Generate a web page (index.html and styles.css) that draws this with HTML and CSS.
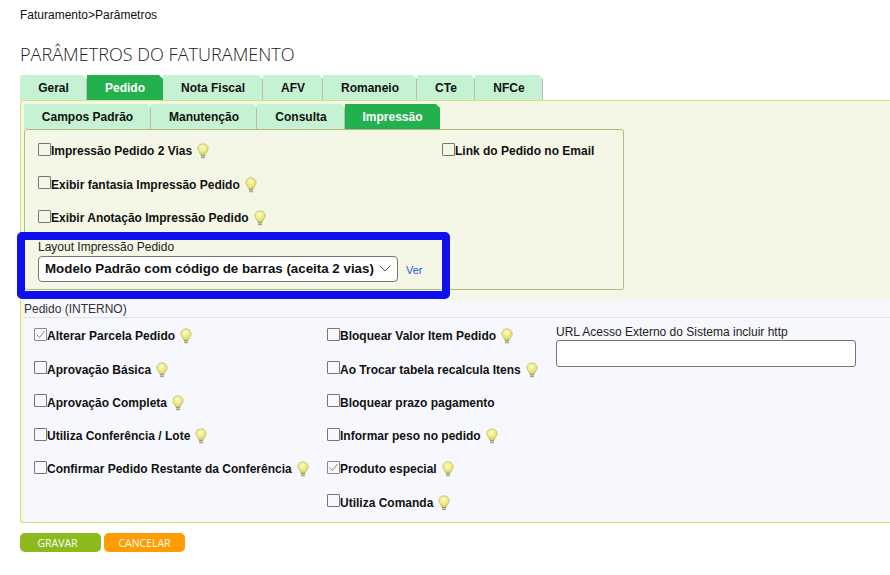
FILE: index.html
```html
<!DOCTYPE html>
<html lang="pt-BR">
<head>
<meta charset="utf-8">
<title>Parâmetros do Faturamento</title>
<link rel="stylesheet" href="styles.css">
</head>
<body>
<svg class="defs" width="0" height="0" aria-hidden="true">
  <defs>
    <radialGradient id="bulbfill" cx="0.45" cy="0.35" r="0.7">
      <stop offset="0" stop-color="#fbfbc8"/>
      <stop offset="0.6" stop-color="#e9e77e"/>
      <stop offset="1" stop-color="#c9c64e"/>
    </radialGradient>
    <symbol id="bulb" viewBox="0 0 12 16">
      <path d="M6 .8C3 .8.8 3 .8 5.700c0 2.300 2.200 3.700 2.900 6.300h4.600c.7-2.600 2.900-4 2.900-6.300C11.200 3 9 .8 6 .8z" fill="url(#bulbfill)" stroke="#c8c777" stroke-width=".9"/>
      <rect x="4" y="12" width="4" height="3.200" fill="#9a9a80"/>
      <rect x="4" y="13.200" width="4" height="1" fill="#d5d5c5"/>
    </symbol>
  </defs>
</svg>
<div class="breadcrumb">Faturamento&gt;Parâmetros</div>
<h1 class="title">PARÂMETROS DO FATURAMENTO</h1>

<nav class="tabs main-tabs">
  <a class="tab t-geral">Geral</a>
  <a class="tab active t-pedido">Pedido</a>
  <a class="tab t-nota">Nota Fiscal</a>
  <a class="tab t-afv">AFV</a>
  <a class="tab t-rom">Romaneio</a>
  <a class="tab t-cte">CTe</a>
  <a class="tab t-nfce">NFCe</a>
</nav>

<section class="panel">
  <nav class="tabs sub-tabs">
    <a class="tab t-campos">Campos Padrão</a>
    <a class="tab t-manut">Manutenção</a>
    <a class="tab t-cons">Consulta</a>
    <a class="tab active t-imp">Impressão</a>
  </nav>

  <div class="print-box">
    <div class="print-cols">
      <div class="col-print">
        <label class="opt"><span class="box"></span>Impressão Pedido 2 Vias<svg class="bulb"><use href="#bulb"/></svg></label>
        <label class="opt"><span class="box"></span>Exibir fantasia Impressão Pedido<svg class="bulb"><use href="#bulb"/></svg></label>
        <label class="opt"><span class="box"></span>Exibir Anotação Impressão Pedido<svg class="bulb"><use href="#bulb"/></svg></label>
      </div>
      <div class="col-link">
        <label class="opt"><span class="box"></span>Link do Pedido no Email</label>
      </div>
    </div>
    <div class="layout-field">
      <div class="field-label">Layout Impressão Pedido</div>
      <div class="layout-row">
        <div class="select-wrap">
          <div class="select">Modelo Padrão com código de barras (aceita 2 vias)</div>
          <svg class="chevron" width="12" height="7" viewBox="0 0 12 7"><path d="M.7.7 6 6l5.300-5.300" fill="none" stroke="#555" stroke-width="1"/></svg>
        </div>
        <a class="ver">Ver</a>
      </div>
    </div>
    <div class="highlight"></div>
  </div>

  <div class="internal">
    <div class="internal-head">Pedido (INTERNO)</div>
    <div class="internal-cols">
      <div class="col-a">
        <label class="opt"><span class="box checked"><svg width="13" height="13" viewBox="0 0 13 13"><path d="M2.500 6.500l3 3 5-6.500" fill="none" stroke="#8a8a8a" stroke-width="1"/></svg></span>Alterar Parcela Pedido<svg class="bulb"><use href="#bulb"/></svg></label>
        <label class="opt"><span class="box"></span>Aprovação Básica<svg class="bulb"><use href="#bulb"/></svg></label>
        <label class="opt"><span class="box"></span>Aprovação Completa<svg class="bulb"><use href="#bulb"/></svg></label>
        <label class="opt"><span class="box"></span>Utiliza Conferência / Lote<svg class="bulb"><use href="#bulb"/></svg></label>
        <label class="opt"><span class="box"></span>Confirmar Pedido Restante da Conferência<svg class="bulb"><use href="#bulb"/></svg></label>
      </div>
      <div class="col-b">
        <label class="opt"><span class="box"></span>Bloquear Valor Item Pedido<svg class="bulb"><use href="#bulb"/></svg></label>
        <label class="opt"><span class="box"></span>Ao Trocar tabela recalcula Itens<svg class="bulb"><use href="#bulb"/></svg></label>
        <label class="opt"><span class="box"></span>Bloquear prazo pagamento</label>
        <label class="opt"><span class="box"></span>Informar peso no pedido<svg class="bulb"><use href="#bulb"/></svg></label>
        <label class="opt"><span class="box checked"><svg width="13" height="13" viewBox="0 0 13 13"><path d="M2.500 6.500l3 3 5-6.500" fill="none" stroke="#8a8a8a" stroke-width="1"/></svg></span>Produto especial<svg class="bulb"><use href="#bulb"/></svg></label>
        <label class="opt"><span class="box"></span>Utiliza Comanda<svg class="bulb"><use href="#bulb"/></svg></label>
      </div>
      <div class="col-c">
        <div class="field-label">URL Acesso Externo do Sistema incluir http</div>
        <div class="text-input"></div>
      </div>
    </div>
  </div>
</section>

<div class="actions">
  <a class="btn btn-save">GRAVAR</a>
  <a class="btn btn-cancel">CANCELAR</a>
</div>
</body>
</html>
```
FILE: styles.css
```css
* { box-sizing: border-box; }
html, body { margin: 0; height: 575px; overflow: hidden; background: #fff; }
body { font-family: "Liberation Sans", Arial, sans-serif; font-size: 12px; color: #111; padding: 8px 0 0 20px; }
.defs { position: absolute; }

.breadcrumb { height: 14px; line-height: 14px; }
.title { margin: 21px 0 0; height: 32px; font-family: "Open Sans", sans-serif; font-weight: 300; font-size: 18.100px; line-height: 22px; color: #222; }

.tabs { display: flex; }
.main-tabs { height: 25px; }
.sub-tabs { height: 25px; margin-left: 3px; }
.tab { display: flex; align-items: center; justify-content: center; padding-left: 1px; background: #c5f2d2; color: #111; font-weight: 700; border-right: 1px solid #bbb; clip-path: polygon(0 0, calc(100% - 4px) 0, 100% 4px, 100% 100%, 0 100%); }
.tab.active { background: #22b14c; color: #fff; border-right-color: #22b14c; }
.t-geral { width: 67px; }
.t-pedido { width: 76px; }
.t-nota { width: 100px; }
.t-afv { width: 60px; }
.t-rom { width: 94px; }
.t-cte { width: 58px; }
.t-nfce { width: 68px; }
.t-campos { width: 127px; }
.t-manut { width: 106px; }
.t-cons { width: 88px; }
.t-imp { width: 95px; }

.panel { border: 1px solid #cfe07c; border-right: 0; border-radius: 3px 0 0 3px; background: #f5f7e6; padding-top: 3px; height: 423px; }

.print-box { position: relative; width: 600px; height: 161px; margin-left: 3px; border: 1px solid #b4b982; border-radius: 3px; padding: 0 0 0 13px; }
.print-cols { display: flex; }
.col-print { width: 404px; padding-top: 4.300px; }
.col-link { padding-top: 4.300px; }

.opt { display: flex; align-items: center; height: 33.500px; font-weight: 700; white-space: nowrap; color: #111; }
.box { flex: none; width: 13px; height: 13px; border: 1px solid #767676; border-radius: 1px; position: relative; top: -2px; }
.box svg { display: block; margin: -1px; }
.box.checked { border-color: #8a8a8a; }
.bulb { flex: none; width: 12px; height: 16px; margin-left: 5px; }

.layout-field { margin-top: 5.700px; }
.field-label { height: 14px; line-height: 14px; color: #222; }
.layout-row { display: flex; align-items: center; margin-top: 2px; }
.select-wrap { position: relative; width: 360px; height: 26px; }
.select { height: 26px; line-height: 24px; border: 1px solid #767676; border-radius: 4px; background: #fff; padding-left: 6px; font-size: 13.333px; font-weight: 700; color: #111; white-space: nowrap; }
.chevron { position: absolute; right: 7px; top: 9px; }
.ver { margin: 2px 0 0 8px; font-size: 11px; color: #1560d4; }

.highlight { position: absolute; left: -8px; top: 102px; width: 433px; height: 67px; border: 8px solid #1010ee; border-radius: 5px; }

.internal { margin: 10px 0 0 3px; height: 222px; background: #f7f8fd; }
.internal-head { height: 18px; line-height: 18px; border-bottom: 1px solid #e2e3e6; color: #333; }
.internal-cols { display: flex; }
.internal-cols .opt { height: 33.250px; }
.col-a { width: 303px; padding: 1.760px 0 0 10px; }
.col-b { width: 229px; padding-top: 1.760px; }
.col-c { padding-top: 7px; }
.col-c .field-label { margin-bottom: 1px; }
.text-input { width: 300px; height: 27px; background: #fff; border: 1px solid #767676; border-radius: 3px; }

.actions { display: flex; gap: 3px; margin-top: 10px; }
.btn { display: flex; align-items: center; justify-content: center; height: 19px; padding-top: 1px; border-radius: 5px; color: #fff; font-family: "Open Sans", sans-serif; font-size: 10.500px; }
.btn-save { width: 81px; padding-right: 6px; background: #8cb91b; }
.btn-cancel { width: 81px; background: #ff9c00; }
```
